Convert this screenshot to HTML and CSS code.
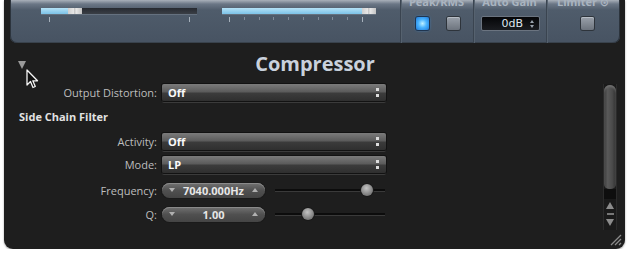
FILE: index.html
```html
<!DOCTYPE html>
<html>
<head>
<meta charset="utf-8">
<link rel="stylesheet" href="styles.css">
</head>
<body>
<div class="win">
  <div class="top">
    <div class="sliders">
      <div class="hslider s1">
        <div class="track"><div class="fill" style="width:27px"></div><div class="thumb"></div></div>
        <div class="ticks major"><i></i><i></i></div>
      </div>
      <div class="hslider s2">
        <div class="track"><div class="fill" style="width:140px"></div><div class="thumb"></div></div>
        <div class="ticks minor"><i></i><i></i><i></i><i></i><i></i><i></i><i></i><i></i><i></i><i></i></div>
      </div>
    </div>
    <div class="grp g-peak">
      <div class="glabel">Peak/RMS</div>
      <div class="gbody"><span class="led on"></span><span class="led"></span></div>
    </div>
    <div class="grp g-gain">
      <div class="glabel">Auto Gain</div>
      <div class="gbody"><span class="lcd"><span class="lcd-txt">0dB</span><span class="lcd-arr"><i class="au"></i><i class="ad"></i></span></span></div>
    </div>
    <div class="grp g-lim">
      <div class="glabel">Limiter &#8857;</div>
      <div class="gbody"><span class="led"></span></div>
    </div>
  </div>

  <div class="main">
    <div class="content">
      <span class="disclose"></span>
      <svg class="cursor" width="13" height="20" viewBox="0 0 13 20"><path d="M1 1 L1 16 L4.5 12.5 L7 18.5 L9.3 17.5 L6.8 11.8 L11.5 11.8 Z" fill="#111" stroke="#f4f4f4" stroke-width="1.3" stroke-linejoin="round"/></svg>
      <div class="title">Compressor</div>
      <div class="row r-od"><span class="lbl">Output Distortion:</span><span class="sel">Off<span class="arr"></span></span></div>
      <div class="section">Side Chain Filter</div>
      <div class="row r-act"><span class="lbl">Activity:</span><span class="sel">Off<span class="arr"></span></span></div>
      <div class="row r-mode"><span class="lbl">Mode:</span><span class="sel">LP<span class="arr"></span></span></div>
      <div class="row r-freq"><span class="lbl">Frequency:</span><span class="step"><span class="dn"></span><span class="val">7040.000Hz</span><span class="up"></span></span><span class="slide"><span class="knob" style="margin-left:86px"></span></span></div>
      <div class="row r-q"><span class="lbl">Q:</span><span class="step"><span class="dn"></span><span class="val">1.00</span><span class="up"></span></span><span class="slide"><span class="knob" style="margin-left:27px"></span></span></div>
    </div>
    <div class="scroll">
      <div class="sthumb"></div>
      <div class="sgap"></div>
      <div class="sarrows"><span class="sup"></span><span class="sline"></span><span class="sdn"></span></div>
    </div>
    <svg class="grip" width="13" height="13" viewBox="0 0 13 13"><path d="M12 2 L2 12 M12 6 L6 12 M12 10 L10 12" stroke="#8a8a8a" stroke-width="1.3"/></svg>
  </div>
</div>
</body>
</html>
```

FILE: styles.css
```css
* { box-sizing: border-box; }
html, body { margin: 0; padding: 0; background: #fff; }
body { font-family: "Open Sans", "DejaVu Sans", sans-serif; }

.win {
  width: 621px;
  height: 249px;
  margin-left: 4px;
  background: #1e1e1e;
  border-radius: 0 0 9px 9px;
  overflow: hidden;
  display: flex;
  flex-direction: column;
  box-shadow: 0 1px 2px rgba(0,0,0,0.4);
}

/* ---------- top panel ---------- */
.top {
  margin: 0 5px 0 6px;
  height: 43px;
  flex: none;
  display: flex;
  background: linear-gradient(#a9b1ba 0px, #6b7786 4px, #4f5c6b 10px, #485463 40px);
  border-radius: 0 0 7px 7px;
  box-shadow: inset 1px 0 0 #2c343d, inset -1px 0 0 #2c343d, inset 0 -1px 0 #39424c;
}
.sliders {
  width: 390px;
  display: flex;
  padding: 8px 0 0 31px;
  gap: 25px;
}
.hslider { display: flex; flex-direction: column; }
.s1 { width: 156px; }
.s2 { width: 154px; }
.track {
  height: 6px;
  display: flex;
  background: linear-gradient(#262a30, #3a3f46);
  box-shadow: 0 1px 0 #65717f;
}
.fill { background: linear-gradient(#b5e2f7, #7cc3e8); }
.thumb {
  width: 14px;
  background: linear-gradient(90deg, #cfcfcf 0, #e6e6e6 40%, #bdbdbd 41%, #e6e6e6 60%, #c4c4c4 100%);
}
.ticks {
  margin-top: 3px;
  height: 5px;
  display: flex;
  justify-content: space-between;
  padding: 0 7px 0 8px;
}
.ticks i { width: 1px; background: #a6b0bb; }
.ticks.minor { padding: 0 13px 0 7px; }
.ticks.minor i { background: #7f8a97; height: 3px; }
.ticks.minor i:first-child, .ticks.minor i:last-child { background: #a6b0bb; height: 5px; }

.grp {
  display: flex;
  flex-direction: column;
  align-items: center;
  box-shadow: inset 1px 0 0 #3a4450, inset 2px 0 0 #56626f;
}
.g-peak { width: 73px; }
.g-gain { width: 73px; }
.g-lim { flex: 1; }
.glabel {
  margin-top: -5px;
  font-size: 11px;
  font-weight: bold;
  line-height: 13px;
  color: #aab4c0;
  white-space: nowrap;
}
.gbody { margin-top: 9px; display: flex; gap: 18px; }
.g-peak .gbody { margin-left: 2px; }
.g-lim .gbody { margin-left: 8px; }
.led {
  width: 13px;
  height: 13px;
  border-radius: 2px;
  background: linear-gradient(#9aa1aa, #6d747e);
  box-shadow: 0 0 0 1px #2e343b, inset 0 1px 0 #b8bec6;
}
.led.on {
  background: radial-gradient(circle at 50% 50%, #bff0ff 0, #4ab4ff 45%, #1e78d8 100%);
  box-shadow: 0 0 0 1px #1f3550, 0 0 3px #3aa0ff;
}
.lcd {
  margin-left: 1px;
  margin-top: -1px;
  width: 59px;
  height: 15px;
  display: flex;
  align-items: center;
  background: linear-gradient(#050608, #1a1c20);
  border: 1px solid #6b7480;
  border-radius: 2px;
  padding: 0 5px 0 20px;
}
.lcd-txt {
  flex: 1;
  color: #dfe6ee;
  font-family: "DejaVu Sans", sans-serif;
  font-size: 11px;
  line-height: 13px;
}
.lcd-arr { display: flex; flex-direction: column; gap: 2px; }
.lcd-arr i { width: 0; height: 0; border-left: 2px solid transparent; border-right: 2px solid transparent; }
.lcd-arr .au { border-bottom: 3px solid #9aa3ad; }
.lcd-arr .ad { border-top: 3px solid #9aa3ad; }

/* ---------- main body ---------- */
.main {
  flex: 1;
  display: flex;
  position: relative;
}
.content {
  width: 596px;
  position: relative;
  display: flex;
  flex-direction: column;
}
.disclose {
  position: absolute;
  left: 14px;
  top: 18px;
  width: 0;
  height: 0;
  border-left: 4.5px solid transparent;
  border-right: 4.5px solid transparent;
  border-top: 8px solid #9a9a9a;
}
.cursor { position: absolute; left: 22px; top: 26px; }
.title {
  margin-top: 8px;
  height: 26px;
  text-align: center;
  font-size: 20px;
  font-weight: bold;
  line-height: 26px;
  color: #c9d1dc;
  padding-left: 26px;
}
.row {
  display: flex;
  align-items: center;
  gap: 5px;
  height: 17px;
}
.r-od { margin-top: 7px; }
.r-act { margin-top: 8px; }
.r-mode { margin-top: 6px; }
.r-freq { margin-top: 9px; height: 16px; }
.r-q { margin-top: 8px; height: 16px; }
.lbl {
  width: 153px;
  text-align: right;
  font-size: 11px;
  color: #bdbdbd;
  white-space: nowrap;
}
.section {
  margin-top: 8px;
  height: 16px;
  padding-left: 15px;
  font-size: 11px;
  font-weight: bold;
  line-height: 16px;
  color: #e2e2e2;
}
.sel {
  position: relative;
  width: 224px;
  height: 17px;
  border-radius: 2px;
  background: linear-gradient(#7b7b7b 0, #5c5c5c 45%, #3b3b3b 55%, #2f2f2f 100%);
  box-shadow: 0 0 0 1px #121212, 0 2px 0 #3b3b3b;
  font-size: 11px;
  font-weight: bold;
  line-height: 17px;
  color: #fafafa;
  padding-left: 6px;
}
.arr {
  position: absolute;
  right: 7px;
  top: 4px;
  width: 3px;
  height: 9px;
  background:
    linear-gradient(#dcdcdc, #dcdcdc) 0 0 / 3px 3px no-repeat,
    linear-gradient(#dcdcdc, #dcdcdc) 0 6px / 3px 3px no-repeat;
}
.step {
  width: 103px;
  height: 15px;
  border-radius: 8px;
  background: linear-gradient(#727272, #505050 50%, #444 100%);
  box-shadow: 0 0 0 1px #1a1a1a, inset 0 1px 0 #8a8a8a;
  display: flex;
  align-items: center;
  padding: 0 7px;
}
.val {
  flex: 1;
  text-align: center;
  font-size: 11px;
  font-weight: bold;
  color: #e6e6e6;
  line-height: 15px;
}
.dn, .up { width: 0; height: 0; border-left: 3px solid transparent; border-right: 3px solid transparent; }
.dn { border-top: 4px solid #b0b0b0; }
.up { border-bottom: 4px solid #b0b0b0; }
.slide {
  margin-left: 5px;
  width: 110px;
  height: 12px;
  display: flex;
  align-items: center;
  background: linear-gradient(transparent 5px, #0c0c0c 5px, #0c0c0c 7px, #3a3a3a 7px, #3a3a3a 8px, transparent 8px);
}
.knob {
  width: 12px;
  height: 12px;
  border-radius: 50%;
  background: radial-gradient(circle at 45% 35%, #c4c4c4 0, #8e8e8e 50%, #5c5c5c 100%);
  box-shadow: 0 0 0 1px #1a1a1a;
}

/* ---------- scrollbar ---------- */
.scroll {
  margin-left: 3px;
  margin-top: 41px;
  width: 14px;
  height: 146px;
  display: flex;
  flex-direction: column;
  align-items: center;
  background: #1a1a1a;
  box-shadow: inset 1px 0 0 #2b2b2b, inset -1px 0 0 #2b2b2b;
}
.sthumb {
  width: 12px;
  height: 104px;
  margin-top: 1px;
  border-radius: 6px 6px 5px 5px;
  background: linear-gradient(90deg, #3a3a3a, #5a5a5a 30%, #4a4a4a 70%, #2e2e2e);
  box-shadow: inset 0 2px 2px #6e6e6e;
}
.sgap {
  width: 12px;
  height: 10px;
  background: #0e0e0e;
}
.sarrows {
  margin-top: 3px;
  display: flex;
  flex-direction: column;
  align-items: center;
  gap: 4px;
}
.sup, .sdn { width: 0; height: 0; border-left: 4px solid transparent; border-right: 4px solid transparent; }
.sup { border-bottom: 7px solid #8c8c8c; }
.sdn { border-top: 7px solid #8c8c8c; }
.sline { width: 7px; height: 2px; background: #777; }
.grip { position: absolute; right: 3px; bottom: 3px; }
```
